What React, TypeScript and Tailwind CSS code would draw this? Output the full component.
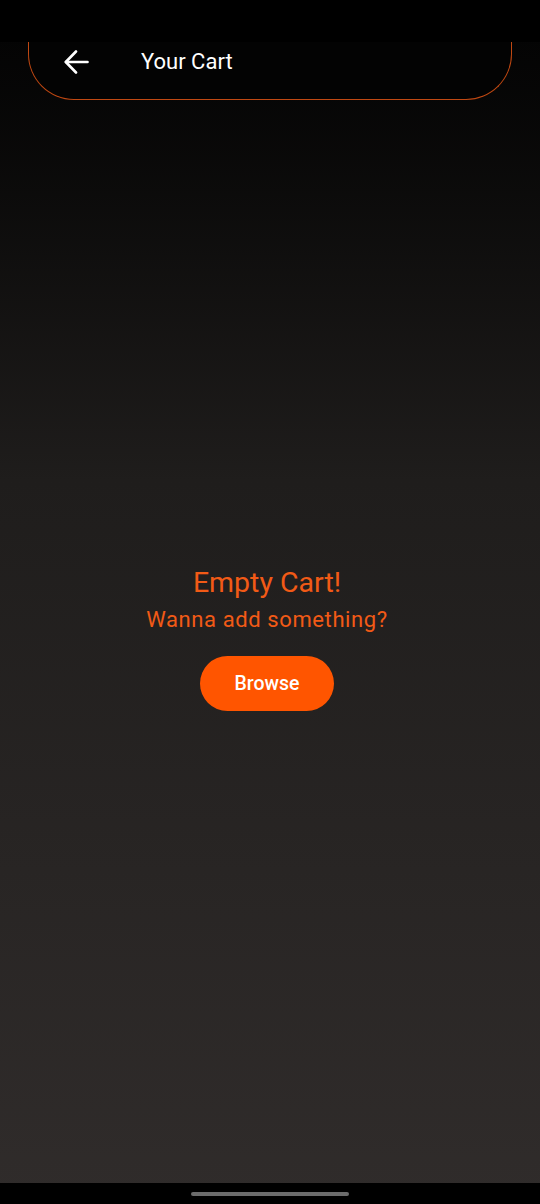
export default function App() {
  return (
    <div
      className="relative flex h-[1204px] w-[540px] flex-col overflow-hidden bg-gradient-to-b from-[#030303] via-[#1f1d1c] via-40% to-[#302c2b]"
      style={{ fontFamily: 'Roboto, "Noto Sans", sans-serif' }}
    >
      {/* status bar area */}
      <div className="h-[42px] shrink-0 bg-black" />

      {/* header */}
      <header className="mx-[28px] flex h-[58px] shrink-0 items-center rounded-b-[46px] border-x-[1.5px] border-b-[1.5px] border-[#c04812] bg-[#030303] pb-[18px]">
        <button className="ml-[35px] flex h-[24px] w-[25px] items-center justify-center text-white">
          <svg width="25" height="24" viewBox="0 0 25 24" fill="none" stroke="currentColor" strokeWidth="2.6" strokeLinecap="round" strokeLinejoin="round">
            <path d="M23.5 12H2" />
            <path d="M12 1.5 1.8 12 12 22.5" />
          </svg>
        </button>
        <h1 className="ml-[52px] text-[22px] leading-none text-white">Your Cart</h1>
      </header>

      {/* empty state */}
      <main className="flex flex-1 flex-col items-center pr-[6px] pt-[466px]">
        <p className="text-[28.5px] leading-[34px] text-[#f25a16]">Empty Cart!</p>
        <p className="mt-[6px] text-[22px] leading-[28px] tracking-[0.6px] text-[#f25a16]">
          Wanna add something?
        </p>
        <button className="mt-[22px] h-[55px] w-[134px] rounded-full bg-[#ff5500] text-[19.5px] font-medium text-white">
          Browse
        </button>
      </main>

      {/* navigation bar */}
      <div className="flex h-[21px] shrink-0 items-center justify-center bg-black">
        <div className="h-[4px] w-[158px] rounded-full bg-[#6b6b6b]" />
      </div>
    </div>
  );
}
